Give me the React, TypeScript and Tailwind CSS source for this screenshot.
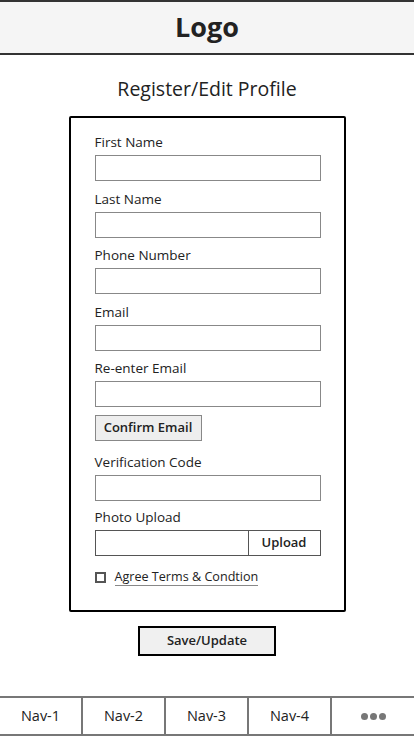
import React from 'react';

const fields = ['First Name', 'Last Name', 'Phone Number', 'Email', 'Re-enter Email'];

function Field({ label }: { label: string }) {
  return (
    <div className="mb-[9.5px]">
      <div className="h-[16px] leading-[16px] text-[13.5px] text-[#222] mb-[5px]">{label}</div>
      <div className="h-[26px] w-[226px] border border-[#888] bg-white" />
    </div>
  );
}

export default function App() {
  return (
    <div className="w-[414px] h-[736px] flex flex-col bg-white text-[#222]" style={{ fontFamily: '"Open Sans", "Noto Sans", sans-serif' }}>
      {/* Header */}
      <div className="h-[55px] shrink-0 flex items-center justify-center border-y-2 border-[#333] bg-[#f5f5f5]">
        <span className="text-[27px] font-bold text-[#222]">Logo</span>
      </div>

      {/* Title */}
      <div className="mt-[22px] h-[24px] leading-[24px] text-center text-[19.5px] text-[#222]">Register/Edit Profile</div>

      {/* Form card */}
      <div className="mt-[15px] mx-auto w-[277px] border-2 border-black rounded-[2px] pl-[24px] pt-[16px] pb-[24px]">
        {fields.map((f) => (
          <Field key={f} label={f} />
        ))}
        <button className="block -mt-[1.5px] h-[26px] w-[107px] border border-[#888] bg-[#eee] text-[13px] font-semibold text-[#222]">
          Confirm Email
        </button>

        <div className="mt-[13px]">
          <Field label="Verification Code" />
        </div>

        <div className="-mt-[1.5px]">
          <div className="h-[16px] leading-[16px] text-[13.5px] text-[#222] mb-[5px]">Photo Upload</div>
          <div className="h-[26px] w-[226px] flex border border-[#555] bg-white">
            <div className="flex-1" />
            <div className="w-[72px] border-l border-[#555] flex items-center justify-center text-[13px] font-semibold">Upload</div>
          </div>
        </div>

        <div className="mt-[13px] flex items-center gap-[9px]">
          <div className="w-[11px] h-[11px] border-2 border-[#555]" />
          <span className="text-[12.6px] leading-[16px] border-b border-[#888]">Agree Terms &amp; Condtion</span>
        </div>
      </div>

      {/* Save */}
      <div className="mt-[14px] flex justify-center">
        <button className="block w-[138px] h-[30px] border-2 border-black bg-[#f0f0f0] text-[13px] font-semibold text-[#222]">
          Save/Update
        </button>
      </div>

      {/* Bottom nav */}
      <div className="mt-auto h-[40px] shrink-0 flex border-y-2 border-[#777]">
        {['Nav-1', 'Nav-2', 'Nav-3', 'Nav-4'].map((n) => (
          <div key={n} className="w-[83px] flex items-center justify-center border-r-2 border-[#777] text-[14.5px] text-[#222]">
            {n}
          </div>
        ))}
        <div className="flex-1 flex items-center justify-center gap-[2px]">
          <span className="w-[7px] h-[7px] rounded-full bg-[#777]" />
          <span className="w-[7px] h-[7px] rounded-full bg-[#777]" />
          <span className="w-[7px] h-[7px] rounded-full bg-[#777]" />
        </div>
      </div>
    </div>
  );
}
